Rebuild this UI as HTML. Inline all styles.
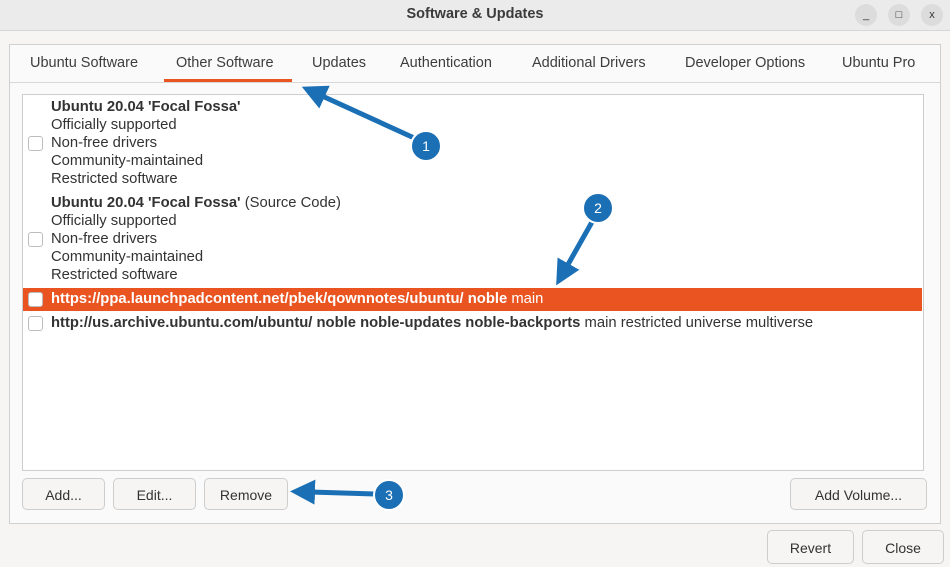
<!DOCTYPE html>
<html><head><style>
body{margin:0;width:950px;height:567px;background:#f6f5f4;font-family:"Liberation Sans",sans-serif;font-size:14px;color:#333;position:relative;overflow:hidden}
.a{position:absolute;white-space:nowrap}
.title{top:0;left:0;width:950px;height:30px;background:#ebebeb;border-bottom:1px solid #d6d6d6}
.wb{position:absolute;top:4px;width:22px;height:22px;border-radius:11px;background:#dcdcdc;font-size:11px;text-align:center;line-height:22px;color:#333}
.frame{left:9px;top:44px;width:930px;height:478px;border:1px solid #cfcfcf;background:#fafafa}
.tab{top:55px;font-size:14.5px;color:#3d3d3d}
.list{left:22px;top:94px;width:900px;height:375px;border:1px solid #cdcdcd;background:#fff}
.cb{position:absolute;width:13px;height:13px;border:1px solid #bdbdbd;border-radius:3px;background:#fff}
.ln{position:absolute;left:51px;font-size:14.8px;color:#333}
.btn{position:absolute;height:32px;border:1px solid #cdcdcd;border-radius:5px;background:#f6f5f4;text-align:center;line-height:32px;font-size:14px;color:#333;box-sizing:border-box}
b{font-weight:bold}
</style></head><body>
<div class="a title"></div>
<div class="a" style="top:6px;left:0;width:950px;text-align:center;font-size:14.5px;font-weight:bold;color:#3b3b3b">Software &amp; Updates</div>
<div class="wb" style="left:855px">_</div>
<div class="wb" style="left:888px">□</div>
<div class="wb" style="left:921px">x</div>
<div class="a frame"></div>
<div class="a" style="left:10px;top:82px;width:930px;border-top:1px solid #d8d8d8"></div>
<div class="a tab" style="left:30px">Ubuntu Software</div>
<div class="a tab" style="left:176px">Other Software</div>
<div class="a" style="left:164px;top:79px;width:128px;height:3px;background:#e95420"></div>
<div class="a tab" style="left:312px">Updates</div>
<div class="a tab" style="left:400px">Authentication</div>
<div class="a tab" style="left:532px">Additional Drivers</div>
<div class="a tab" style="left:685px">Developer Options</div>
<div class="a tab" style="left:842px">Ubuntu Pro</div>
<div class="a list"></div>
<div class="ln" style="top:99px"><b>Ubuntu 20.04 'Focal Fossa'</b></div>
<div class="ln" style="top:117px">Officially supported</div>
<div class="ln" style="top:135px">Non-free drivers</div>
<div class="ln" style="top:153px">Community-maintained</div>
<div class="ln" style="top:171px">Restricted software</div>
<div class="cb" style="left:28px;top:136px"></div>
<div class="ln" style="top:195px"><b>Ubuntu 20.04 'Focal Fossa'</b> (Source Code)</div>
<div class="ln" style="top:213px">Officially supported</div>
<div class="ln" style="top:231px">Non-free drivers</div>
<div class="ln" style="top:249px">Community-maintained</div>
<div class="ln" style="top:267px">Restricted software</div>
<div class="cb" style="left:28px;top:232px"></div>
<div class="a" style="left:23px;top:288px;width:899px;height:23px;background:#e95420"></div>
<div class="cb" style="left:28px;top:292px"></div>
<div class="ln" style="top:291px;color:#fff"><b>https://ppa.launchpadcontent.net/pbek/qownnotes/ubuntu/ noble</b> main</div>
<div class="cb" style="left:28px;top:316px"></div>
<div class="ln" style="top:315px"><b>http://us.archive.ubuntu.com/ubuntu/ noble noble-updates noble-backports</b> main restricted universe multiverse</div>
<div class="btn" style="left:22px;top:478px;width:83px">Add...</div>
<div class="btn" style="left:113px;top:478px;width:83px">Edit...</div>
<div class="btn" style="left:204px;top:478px;width:84px">Remove</div>
<div class="btn" style="left:790px;top:478px;width:137px">Add Volume...</div>
<div class="btn" style="left:767px;top:530px;width:87px;height:34px;line-height:34px">Revert</div>
<div class="btn" style="left:862px;top:530px;width:82px;height:34px;line-height:34px">Close</div>
<svg class="a" style="left:0;top:0" width="950" height="567">
<defs><marker id="m" markerWidth="5" markerHeight="5" refX="1" refY="2.5" orient="auto"><path d="M0,0 L5,2.5 L0,5z" fill="#1a6fb5"/></marker></defs>
<g stroke="#1a6fb5" stroke-width="5" fill="none" stroke-linecap="round">
<line x1="412" y1="137" x2="320" y2="95" marker-end="url(#m)"/>
<line x1="592" y1="222" x2="566" y2="268" marker-end="url(#m)"/>
<line x1="375" y1="494" x2="310" y2="492" marker-end="url(#m)"/>
</g>
<g fill="#1a6fb5" stroke="#fff" stroke-width="2">
<circle cx="426" cy="146" r="15"/><circle cx="598" cy="208" r="15"/><circle cx="389" cy="495" r="15"/>
</g>
<g fill="#fff" font-family="Liberation Sans" font-size="14" text-anchor="middle">
<text x="426" y="151">1</text><text x="598" y="213">2</text><text x="389" y="500">3</text>
</g>
</svg>
</body></html>
